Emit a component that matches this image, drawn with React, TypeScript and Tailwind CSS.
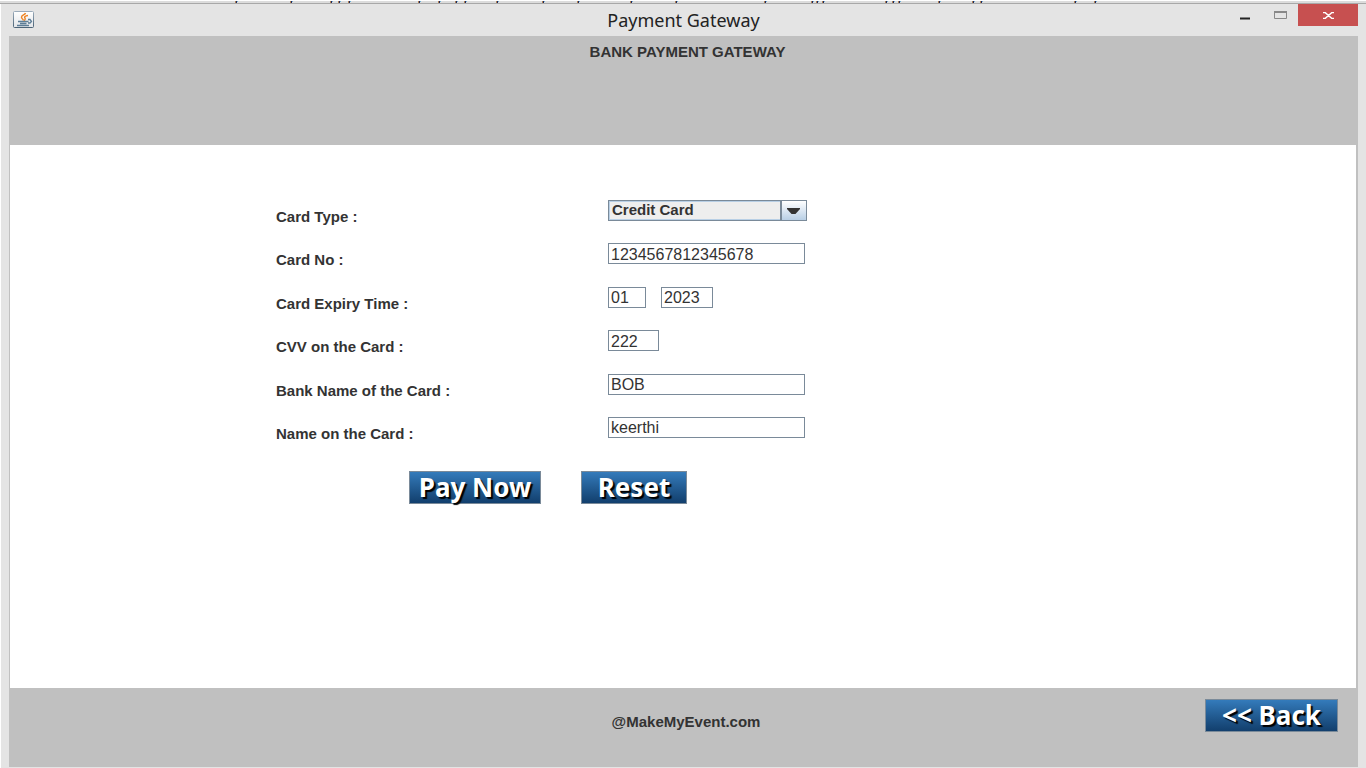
import React from "react";

const inputClass =
  "block h-[21px] border border-[#7a8a99] bg-white px-[2px] pt-[2px] font-['Liberation_Sans',Arial,sans-serif] text-[16px] leading-[19px] text-[#333] outline-none";

const buttonClass =
  "h-[33px] border border-[#7a8a99] bg-linear-to-b from-[#347bbb] to-[#123f6d] font-['Noto_Sans',sans-serif] text-[26px] leading-[31px] font-bold whitespace-nowrap text-white [text-shadow:2px_2px_1px_#000]";

const edgeMarks = [
  236, 291, 331, 339, 349, 419, 439, 456, 465, 497, 543, 578, 631, 676, 765, 812, 817, 823, 886, 893, 899, 939, 973, 981,
  1075, 1095,
];

function WindowEdge() {
  return (
    <div className="h-1 shrink-0 overflow-hidden border-t border-b border-t-white border-b-[#a8a8a8] bg-[#dcdcdc]">
      <svg width="1366" height="2" viewBox="0 0 1366 2" aria-hidden="true" shapeRendering="crispEdges">
        {edgeMarks.map((x) => (
          <g key={x}>
            <path d={`M${x - 1} 0h1v2h-1z`} fill="#b08050" />
            <path d={`M${x} 0h1v2h-1z`} fill="#23285a" />
            <path d={`M${x + 1} 0h1v1h-1z`} fill="#6bb0d8" />
          </g>
        ))}
      </svg>
    </div>
  );
}

function JavaIcon() {
  return (
    <svg width="21" height="17" viewBox="0 0 21 17" aria-hidden="true">
      <defs>
        <linearGradient id="frame" x1="0" y1="0" x2="0" y2="1">
          <stop offset="0" stopColor="#9babba" />
          <stop offset="1" stopColor="#4b6377" />
        </linearGradient>
        <linearGradient id="face" x1="0" y1="0" x2="0" y2="1">
          <stop offset="0" stopColor="#ffffff" />
          <stop offset="1" stopColor="#e2e5e8" />
        </linearGradient>
      </defs>
      <rect x="0.5" y="0.5" width="20" height="16" rx="1" fill="url(#face)" stroke="url(#frame)" />
      <path d="M12.500 2C12 4 8.500 4 8.500 6.200C8.500 7.500 10 8 10.500 9.500M15 4.500C12 4.800 11 6 12 7C12.500 8 12 9 11 9.500" fill="none" stroke="#ee8322" strokeWidth="1.400" />
      <path d="M5 10.500H15.500M7 12.500H13.500M4 14.500H16M15 8.500H17L18.500 10.500L17 12H15" fill="none" stroke="#5c7d96" strokeWidth="1.300" />
    </svg>
  );
}

function TitleBar() {
  return (
    <header className="grid h-8 shrink-0 grid-cols-[1fr_auto_1fr] items-start">
      <div className="pt-[7px] pl-3">
        <JavaIcon />
      </div>
      <h1 className="font-['Noto_Sans',sans-serif] text-[18px] leading-8 text-[#222]">Payment Gateway</h1>
      <div className="flex justify-end pr-2">
        <button type="button" aria-label="Minimize" className="grid h-[22px] w-9 place-items-center">
          <svg width="10" height="12" viewBox="0 0 10 12"><path d="M0 8.500H10V10.500H0z" fill="#222" /></svg>
        </button>
        <button type="button" aria-label="Maximize" className="grid h-[22px] w-[35px] place-items-center">
          <svg width="13" height="8" viewBox="0 0 13 8"><path d="M.5 1V7.500H12.500V1" fill="none" stroke="#888" /><path d="M0 0H13V2H0z" fill="#888" /></svg>
        </button>
        <button type="button" aria-label="Close" className="grid h-[22px] w-[60px] place-items-center bg-[#c75050]">
          <svg width="11" height="7" viewBox="0 0 11 7"><path d="M0 .5H2L9 6.500H11M11 .5H9L2 6.500H0" fill="none" stroke="#fff" strokeWidth="1.500" /></svg>
        </button>
      </div>
    </header>
  );
}

function Row({ id, label, children }: { id: string; label: string; children: React.ReactNode }) {
  return (
    <div className="grid h-[21px] grid-cols-[332px_auto] items-start">
      <label htmlFor={id} className="pt-[9px] text-[15px] leading-4 font-bold">{label}</label>
      <div className="flex items-start">{children}</div>
    </div>
  );
}

export default function App() {
  return (
    <div className="flex min-h-screen flex-col bg-[#e4e4e4] font-['Liberation_Sans',Arial,sans-serif] text-[#333]">
      <WindowEdge />
      <div className="flex flex-1 flex-col border-l border-white">
        <TitleBar />
        <div className="mr-2 mb-px ml-2 flex flex-1 flex-col bg-[#c0c0c0]">
          <div className="h-[109px] shrink-0 pt-2 pl-2 text-center">
            <h2 className="text-[15px] leading-4 font-bold">BANK PAYMENT GATEWAY</h2>
          </div>
          <main className="mr-0.5 ml-px flex-1 bg-white pt-[55px] pl-[266px]">
            <form onSubmit={(e) => e.preventDefault()}>
              <div className="flex h-[238px] flex-col justify-between">
                <Row id="type" label="Card Type :">
                  <div className="grid h-[21px] w-[199px] grid-cols-[1fr_26px] border border-[#7a8a99]">
                    <select id="type" className="col-span-2 col-start-1 row-start-1 h-[19px] appearance-none border border-[#b8cfe5] bg-[#eee] pb-px pl-[2px] text-[15px] leading-4 font-bold outline-none">
                      <option>Credit Card</option>
                      <option>Debit Card</option>
                    </select>
                    <span className="pointer-events-none col-start-2 row-start-1 grid place-items-center border-l-2 border-[#7a8a99] bg-linear-to-b from-white to-[#b8cfe5] pr-px">
                      <svg width="13" height="6" viewBox="0 0 13 6"><path d="M0 0H13V1L8.500 6H4.500L0 1z" fill="#333" /></svg>
                    </span>
                  </div>
                </Row>
                <Row id="number" label="Card No :">
                  <input id="number" defaultValue="1234567812345678" className={`${inputClass} w-[197px]`} />
                </Row>
                <Row id="month" label="Card Expiry Time :">
                  <input id="month" defaultValue="01" className={`${inputClass} mr-[15px] w-[38px]`} />
                  <input aria-label="Card expiry year" defaultValue="2023" className={`${inputClass} w-[52px]`} />
                </Row>
                <Row id="cvv" label="CVV on the Card :">
                  <input id="cvv" defaultValue="222" className={`${inputClass} w-[51px]`} />
                </Row>
                <Row id="bank" label="Bank Name of the Card :">
                  <input id="bank" defaultValue="BOB" className={`${inputClass} w-[197px]`} />
                </Row>
                <Row id="name" label="Name on the Card :">
                  <input id="name" defaultValue="keerthi" className={`${inputClass} w-[197px]`} />
                </Row>
              </div>
              <div className="flex gap-10 pt-[33px] pl-[133px]">
                <button type="submit" className={`${buttonClass} w-[132px]`}>Pay Now</button>
                <button type="reset" className={`${buttonClass} w-[106px]`}>Reset</button>
              </div>
            </form>
          </main>
          <footer className="grid h-[79px] shrink-0 grid-cols-[1fr_auto_1fr] items-start pt-[11px] pr-5 pl-[25px]">
            <p className="col-start-2 pt-[15px] text-[15px] leading-4 font-bold">@MakeMyEvent.com</p>
            <button type="button" className={`${buttonClass} w-[133px] justify-self-end`}>&lt;&lt; Back</button>
          </footer>
        </div>
      </div>
    </div>
  );
}
